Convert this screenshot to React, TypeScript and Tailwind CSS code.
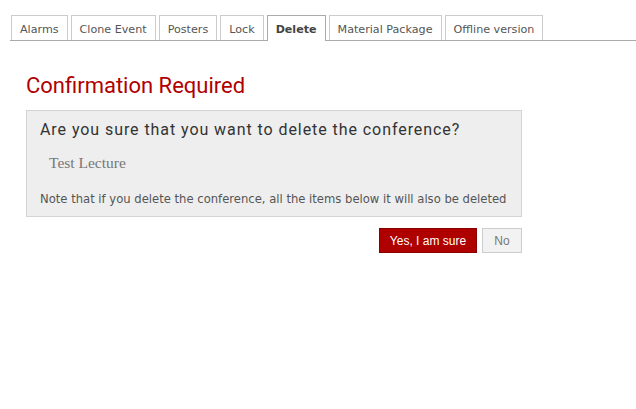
import React from "react"

const tabs = ["Alarms", "Clone Event", "Posters", "Lock", "Delete", "Material Package", "Offline version"]

export default function App() {
  return (
    <div className="w-[636px] h-[409px] bg-white">
      <div className="pt-[15px] pl-[10px]">
        <div className="flex gap-[3px] border-b border-[#aaa] pl-px">
          {tabs.map((t) =>
            t === "Delete" ? (
              <div
                key={t}
                className="-mb-px h-[26px] px-[8px] pt-[7px] border border-b-0 border-[#aaa] bg-white text-[11.1px] leading-[13px] font-bold text-[#444] font-['DejaVu_Sans',sans-serif]"
              >
                {t}
              </div>
            ) : (
              <div
                key={t}
                className="h-[25px] px-[8px] pt-[7px] border border-b-0 border-[#ccc] bg-white text-[11.15px] leading-[13px] text-[#555] font-['DejaVu_Sans',sans-serif]"
              >
                {t}
              </div>
            )
          )}
        </div>
      </div>
      <div className="pl-[26px] w-[522px]">
        <h1 className="mt-[32px] text-[22px] leading-[26px] text-[#b00000] font-['Roboto',sans-serif]">
          Confirmation Required
        </h1>
        <div className="mt-[11px] h-[107px] border border-[#d4d4d4] bg-[#eeeeee] px-[13px] pt-[9px]">
          <div className="text-[16px] leading-[19px] text-[#333] font-['Roboto',sans-serif] tracking-[0.93px]">
            Are you sure that you want to delete the conference?
          </div>
          <div className="mt-[14px] pl-[9px] text-[15.5px] leading-[19px] text-[#777] font-['Liberation_Serif',serif]">
            Test Lecture
          </div>
          <div className="mt-[19px] text-[11.6px] leading-[16px] text-[#555] font-['DejaVu_Sans',sans-serif] whitespace-nowrap">
            Note that if you delete the conference, all the items below it will also be deleted
          </div>
        </div>
        <div className="mt-[11px] flex justify-end gap-[5px]">
          <button className="h-[25px] w-[98px] bg-[#af0000] border border-[#8a0000] text-white text-[12px] font-['Liberation_Sans',sans-serif]">
            Yes, I am sure
          </button>
          <button className="h-[25px] w-[40px] bg-[#f2f2f2] border border-[#ccc] text-[#777] text-[12px] font-['Liberation_Sans',sans-serif]">
            No
          </button>
        </div>
      </div>
    </div>
  )
}
